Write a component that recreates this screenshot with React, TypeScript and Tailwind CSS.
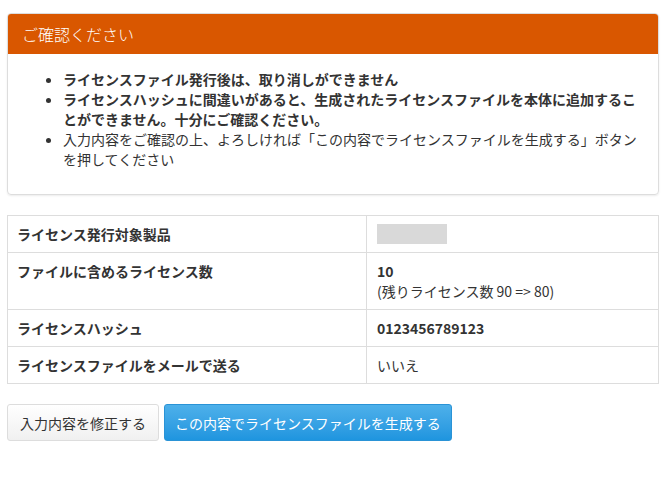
import React from "react";

const rows = [
  {label: "ライセンス発行対象製品", value: <div className="h-[20px] w-[70px] bg-[#d9d9d9]"/>},
  {
    label: "ファイルに含めるライセンス数",
    value: <><div className="font-bold">10</div><div>(残りライセンス数 90 =&gt; 80)</div></>,
  },
  {label: "ライセンスハッシュ", value: <span className="font-bold">0123456789123</span>},
  {label: "ライセンスファイルをメールで送る", value: <span>いいえ</span>},
]

export default function App() {
  return (
    <div
      className="min-h-screen bg-white text-[#333] text-[14px] leading-[20px] pl-[7px] pt-[13px]"
      style={{fontFamily: '"Noto Sans CJK JP", "Noto Sans", sans-serif'}}
    >
      <div className="w-[652px]">
        <div className="border border-[#ddd] rounded-[4px] shadow-[0_1px_2px_rgba(0,0,0,0.08)] overflow-hidden mb-[20px]">
          <div className="bg-[#d95700] text-white text-[16px] font-light px-[14px] h-[40px] flex items-center">
            ご確認ください
          </div>
          <div className="px-[15px] pt-[15px] pb-[15px]">
            <ul className="list-disc pl-[40px] mb-[10px]">
              <li className="font-bold">ライセンスファイル発行後は、取り消しができません</li>
              <li className="font-bold">ライセンスハッシュに間違いがあると、生成されたライセンスファイルを本体に追加することができません。十分にご確認ください。</li>
              <li>入力内容をご確認の上、よろしければ「この内容でライセンスファイルを生成する」ボタンを押してください</li>
            </ul>
          </div>
        </div>

        <table className="w-full border-collapse border border-[#ddd] mb-[20px]">
          <tbody>
          {rows.map((row, i) => (
            <tr key={i}>
              <th className="w-[359px] border border-[#ddd] px-[9px] py-[8px] text-left align-top font-bold">{row.label}</th>
              <td className="border border-[#ddd] px-[10px] py-[8px] align-top">{row.value}</td>
            </tr>
          ))}
          </tbody>
        </table>

        <div className="flex gap-[5px]">
          <button className="h-[37px] px-[12px] rounded-[3px] border border-[#ddd] bg-gradient-to-b from-white to-[#f0f0f0] text-[#333]">
            入力内容を修正する
          </button>
          <button className="h-[37px] px-[10px] rounded-[3px] border border-[#2a93d6] bg-gradient-to-b from-[#4db0ea] to-[#1e95df] text-white">
            この内容でライセンスファイルを生成する
          </button>
        </div>
      </div>
    </div>
  )
}
